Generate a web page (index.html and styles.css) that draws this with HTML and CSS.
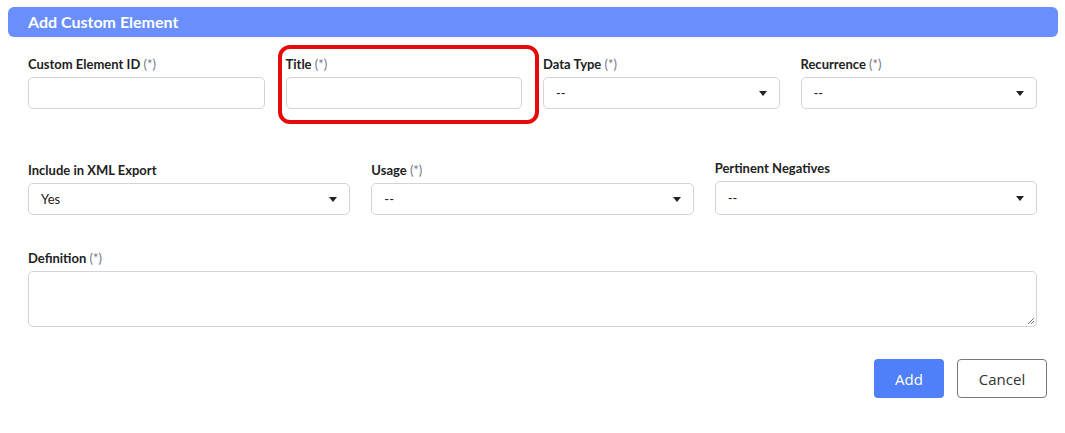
FILE: index.html
```html
<!DOCTYPE html>
<html>
<head>
<meta charset="utf-8">
<link rel="stylesheet" href="styles.css">
</head>
<body>
<div class="panel">
  <div class="header">Add Custom Element</div>
  <div class="form">
    <div class="row row-4">
      <div class="field">
        <label class="lbl">Custom Element ID <span class="req">(*)</span></label>
        <div class="input"></div>
      </div>
      <div class="field highlighted">
        <label class="lbl">Title <span class="req">(*)</span></label>
        <div class="input"></div>
        <div class="mark"></div>
      </div>
      <div class="field">
        <label class="lbl">Data Type <span class="req">(*)</span></label>
        <div class="input select"><span>--</span><span class="caret"></span></div>
      </div>
      <div class="field">
        <label class="lbl">Recurrence <span class="req">(*)</span></label>
        <div class="input select"><span>--</span><span class="caret"></span></div>
      </div>
    </div>
    <div class="row row-3">
      <div class="field">
        <label class="lbl">Include in XML Export</label>
        <div class="input select"><span>Yes</span><span class="caret"></span></div>
      </div>
      <div class="field">
        <label class="lbl">Usage <span class="req">(*)</span></label>
        <div class="input select"><span>--</span><span class="caret"></span></div>
      </div>
      <div class="field tall">
        <label class="lbl">Pertinent Negatives</label>
        <div class="input select"><span>--</span><span class="caret"></span></div>
      </div>
    </div>
    <div class="row row-1">
      <div class="field">
        <label class="lbl">Definition <span class="req">(*)</span></label>
        <div class="input textarea"><svg class="grip" width="8" height="8" viewBox="0 0 8 8"><path d="M7 1L1 7M7 4L4 7" stroke="#777" stroke-width="1"/></svg></div>
      </div>
    </div>
    <div class="actions">
      <button class="btn btn-primary">Add</button>
      <button class="btn btn-default">Cancel</button>
    </div>
  </div>
</div>
</body>
</html>
```
FILE: styles.css
```css
html, body { margin: 0; padding: 0; background: #fff; }
body { font-family: Lato, "Noto Sans", sans-serif; color: #222; }
.panel { padding: 7px 7px 0 8px; }
.header {
  height: 30px;
  background: #6a8ffc;
  border-radius: 6px;
  color: #fff;
  font-weight: 700;
  font-size: 16px;
  line-height: 30px;
  padding-left: 20px;
}
.form { padding: 19px 0 0 20px; }
.row { display: grid; column-gap: 21px; align-items: end; width: 1009px; }
.row-4 { grid-template-columns: repeat(4, 1fr); }
.row-3 { grid-template-columns: repeat(3, 1fr); margin-top: 51px; }
.row-1 { grid-template-columns: 1fr; margin-top: 35px; }
.field { display: flex; flex-direction: column; position: relative; }
.lbl {
  font-size: 13px;
  font-weight: 700;
  line-height: 17px;
  margin-bottom: 4px;
  color: #222;
}
.req { font-weight: 400; color: #727a88; }
.input {
  box-sizing: border-box;
  height: 32px;
  border: 1px solid #d4d4d4;
  border-radius: 5px;
  background: #fff;
}
.select {
  display: flex;
  align-items: center;
  justify-content: space-between;
  padding: 0 12px 0 12px;
  font-size: 13px;
  color: #222;
}
.caret {
  width: 0; height: 0;
  border-left: 4px solid transparent;
  border-right: 4px solid transparent;
  border-top: 5px solid #222;
  margin-top: 1px;
}
.tall .input { height: 34px; }
.textarea { height: 56px; position: relative; }
.grip { position: absolute; right: 1px; bottom: 1px; }
.mark {
  position: absolute;
  left: -8px; top: -11px;
  width: 261px; height: 79px;
  box-sizing: border-box;
  border: 4px solid #e50b0b;
  border-radius: 12px;
  pointer-events: none;
}
.actions {
  display: flex;
  justify-content: flex-end;
  gap: 13px;
  margin-top: 32px;
  margin-right: 11px;
}
.btn {
  box-sizing: border-box;
  height: 39px;
  font-family: "Open Sans", sans-serif;
  font-size: 15px;
  border-radius: 4px;
  cursor: pointer;
}
.btn-primary { width: 70px; background: #4f7ff9; color: #fff; border: none; }
.btn-default { width: 90px; background: #fff; color: #333; border: 1px solid #777; }
```
